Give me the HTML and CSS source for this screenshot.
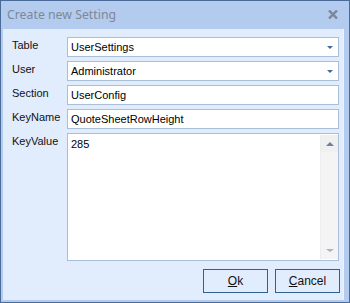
FILE: index.html
```html
<!DOCTYPE html>
<html lang="en">
<head>
    <meta charset="UTF-8">
    <title>Create new Setting</title>
    <link rel="stylesheet" href="styles.css">
</head>
<body>
    <div class="window">
        <div class="titlebar">
            <span class="title">Create new Setting</span>
            <svg class="close" width="10" height="9" viewBox="0 0 10 9">
                <path d="M1 0.5 L9 8.5 M9 0.5 L1 8.5" stroke="#7b8696" stroke-width="2.4" fill="none"/>
            </svg>
        </div>
        <div class="content">
            <div class="form">
                <label>Table</label>
                <div class="field combo">
                    <span>UserSettings</span>
                    <span class="arrow"></span>
                </div>

                <label>User</label>
                <div class="field combo">
                    <span>Administrator</span>
                    <span class="arrow"></span>
                </div>

                <label>Section</label>
                <div class="field"><span>UserConfig</span></div>

                <label>KeyName</label>
                <div class="field"><span>QuoteSheetRowHeight</span></div>

                <label>KeyValue</label>
                <div class="field memo">
                    <span class="memo-text">285</span>
                    <div class="scrollbar">
                        <div class="scroll-btn"><span class="up"></span></div>
                        <div class="scroll-btn bottom"><span class="down"></span></div>
                    </div>
                </div>
            </div>
            <div class="buttons">
                <button class="button"><u>O</u>k</button>
                <button class="button"><u>C</u>ancel</button>
            </div>
        </div>
    </div>
</body>
</html>
```

FILE: styles.css
```css
body {
    margin: 0;
    font-family: 'Liberation Sans', Arial, sans-serif;
}

.window {
    width: 350px;
    height: 303px;
    box-sizing: border-box;
    border: 1px solid #4a6a97;
    background-color: #b3cbee;
    display: flex;
    flex-direction: column;
}

.titlebar {
    height: 28px;
    display: flex;
    align-items: center;
    justify-content: space-between;
    padding: 0 11px 1px 6px;
    box-sizing: border-box;
}

.title {
    font-family: 'Noto Sans', sans-serif;
    font-size: 12.3px;
    color: #7d8898;
}

.content {
    flex: 1;
    margin: 0 5px 2px 2px;
    background-color: #e1ecfc;
    border-right: 1px solid #edf3fd;
    padding: 8px 3px 6px 9px;
    display: flex;
    flex-direction: column;
}

.form {
    display: grid;
    grid-template-columns: 55px 1fr;
    grid-template-rows: 20px 20px 20px 20px 128px;
    row-gap: 4px;
}

.form label {
    font-size: 11px;
    color: #111;
    padding-top: 2px;
}

.field {
    background-color: #fff;
    border: 1px solid #a9bed8;
    box-sizing: border-box;
    margin-right: 1px;
    display: flex;
    align-items: center;
    padding-left: 3px;
    font-size: 11px;
    color: #000;
    position: relative;
}

.combo {
    justify-content: space-between;
}

.arrow {
    width: 0;
    height: 0;
    border-left: 3px solid transparent;
    border-right: 3px solid transparent;
    border-top: 3px solid #41699f;
    margin-right: 5px;
    margin-top: 1px;
}

.memo {
    align-items: flex-start;
}

.memo-text {
    margin-top: 4px;
}

.scrollbar {
    position: absolute;
    top: 1px;
    right: 0;
    bottom: 1px;
    width: 17px;
    background-color: #f4f4f4;
    border-left: 1px solid #ededed;
    display: flex;
    flex-direction: column;
    justify-content: space-between;
}

.scroll-btn {
    height: 17px;
    display: flex;
    align-items: center;
    justify-content: center;
    background-color: #f0f0f0;
}

.scroll-btn.bottom {
    background-color: transparent;
}

.up {
    width: 0;
    height: 0;
    border-left: 4px solid transparent;
    border-right: 4px solid transparent;
    border-bottom: 4px solid #707f9d;
}

.down {
    width: 0;
    height: 0;
    border-left: 4px solid transparent;
    border-right: 4px solid transparent;
    border-top: 3px solid #a7b2c8;
}

.buttons {
    display: flex;
    justify-content: flex-end;
    gap: 7px;
    margin-top: 8px;
}

.button {
    width: 65px;
    height: 24px;
    margin: 0;
    padding: 0;
    background-color: #e1ecfc;
    border: 1px solid #2f6190;
    font-family: 'Liberation Sans', Arial, sans-serif;
    font-size: 12px;
    color: #111;
}
```
